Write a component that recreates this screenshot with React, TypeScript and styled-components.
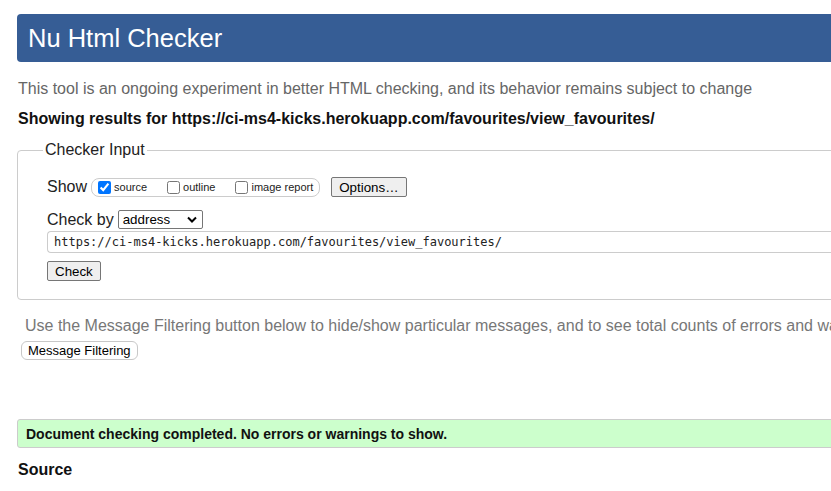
import React from 'react'
import styled, { createGlobalStyle } from 'styled-components'

const GlobalStyle = createGlobalStyle`
  html, body {
    margin: 0;
    padding: 0;
    background: #fff;
    overflow: hidden;
  }
  body {
    font-family: 'Liberation Sans', Arial, sans-serif;
    color: #222;
  }
`

const Page = styled.div`
  width: 1100px;
  padding: 14px 0 0 17px;
`

const Header = styled.h1`
  margin: 0;
  height: 48px;
  display: flex;
  align-items: center;
  padding-left: 11px;
  background: #365d95;
  color: #fff;
  font-size: 25.5px;
  font-weight: normal;
  border-radius: 4px;
`

const Intro = styled.p`
  margin: 18px 0 0 1px;
  font-size: 16px;
  line-height: 18px;
  color: #666;
`

const Results = styled.p`
  margin: 12px 0 0 1px;
  font-size: 16px;
  line-height: 18px;
  font-weight: bold;
  color: #111;
`

const Fieldset = styled.fieldset`
  margin: 13px 0 0 0;
  padding: 18px 0 18px 29px;
  border: 1px solid #ccc;
  border-radius: 4px;
  display: flex;
  flex-direction: column;
`

const Legend = styled.legend`
  margin-left: -4px;
  padding: 0 2px;
  font-size: 16px;
  line-height: 18px;
  color: #222;
`

const Row = styled.div<{ $top?: number }>`
  display: flex;
  align-items: center;
  gap: 4px;
  margin-top: ${p => p.$top ?? 0}px;
  font-size: 16px;
`

const Group = styled.div`
  display: flex;
  align-items: center;
  height: 17px;
  padding: 0 6px 0 6px;
  border: 1px solid #ccc;
  border-radius: 8px;
`

const Option = styled.label<{ $gap?: number }>`
  display: flex;
  align-items: center;
  gap: 3px;
  margin-left: ${p => p.$gap ?? 0}px;
  font-size: 11px;
  color: #222;
  input {
    margin: 0;
    width: 13px;
    height: 13px;
    accent-color: #0075ff;
  }
`

const Button = styled.button<{ $rounded?: boolean }>`
  font-family: 'Liberation Sans', Arial, sans-serif;
  font-size: ${p => (p.$rounded ? '13px' : '13.33px')};
  height: 20px;
  padding: 0 ${p => (p.$rounded ? 6 : 7)}px;
  color: #000;
  background: ${p => (p.$rounded ? '#fff' : '#efefef')};
  border: 1px solid ${p => (p.$rounded ? '#c8c8c8' : '#767676')};
  border-radius: ${p => (p.$rounded ? '6px' : '2px')};
`

const Select = styled.div`
  display: flex;
  align-items: center;
  justify-content: space-between;
  width: 85px;
  height: 19px;
  box-sizing: border-box;
  padding: 0 5px 0 4px;
  border: 1px solid #767676;
  border-radius: 2px;
  font-size: 13.33px;
  color: #000;
`

const UrlInput = styled.div`
  margin-top: 2px;
  height: 22px;
  box-sizing: border-box;
  display: flex;
  align-items: center;
  padding-left: 6px;
  border: 1px solid #ccc;
  border-right: none;
  border-radius: 4px 0 0 4px;
  font-family: 'DejaVu Sans Mono', 'Liberation Mono', monospace;
  font-size: 12px;
  color: #222;
`

const Note = styled.p`
  margin: 17px 0 0 8px;
  font-size: 16px;
  line-height: 18px;
  color: #777;
`

const FilterRow = styled.div`
  margin: 6px 0 0 4px;
  button {
    height: 19px;
  }
`

const Success = styled.div`
  margin-top: 59px;
  height: 29px;
  box-sizing: border-box;
  display: flex;
  align-items: center;
  padding-left: 8px;
  background: #ccffcc;
  border: 1px solid #ccc;
  border-radius: 3px;
  font-size: 14px;
  font-weight: bold;
  color: #111;
`

const SourceTitle = styled.h2`
  margin: 13px 0 0 1px;
  font-size: 16px;
  line-height: 18px;
  font-weight: bold;
  color: #111;
`

const Chevron = () => (
  <svg width="10" height="7" viewBox="0 0 10 7">
    <path d="M1 1.5 L5 5.5 L9 1.5" fill="none" stroke="#000" strokeWidth="2" />
  </svg>
)

const App = () => {
  const url = 'https://ci-ms4-kicks.herokuapp.com/favourites/view_favourites/'
  return (
    <Page>
      <GlobalStyle />
      <Header>Nu Html Checker</Header>
      <Intro>
        This tool is an ongoing experiment in better HTML checking, and its behavior remains
        subject to change
      </Intro>
      <Results>Showing results for {url}</Results>
      <Fieldset>
        <Legend>Checker Input</Legend>
        <Row>
          Show
          <Group>
            <Option>
              <input type="checkbox" defaultChecked />
              source
            </Option>
            <Option $gap={20}>
              <input type="checkbox" />
              outline
            </Option>
            <Option $gap={20}>
              <input type="checkbox" />
              image report
            </Option>
          </Group>
          <Button style={{ marginLeft: 7 }}>Options…</Button>
        </Row>
        <Row $top={13}>
          Check by
          <Select>
            address
            <Chevron />
          </Select>
        </Row>
        <UrlInput>{url}</UrlInput>
        <Row $top={8}>
          <Button>Check</Button>
        </Row>
      </Fieldset>
      <Note>
        Use the Message Filtering button below to hide/show particular messages, and to see total
        counts of errors and warnings.
      </Note>
      <FilterRow>
        <Button $rounded>Message Filtering</Button>
      </FilterRow>
      <Success>Document checking completed. No errors or warnings to show.</Success>
      <SourceTitle>Source</SourceTitle>
    </Page>
  )
}

export default App
